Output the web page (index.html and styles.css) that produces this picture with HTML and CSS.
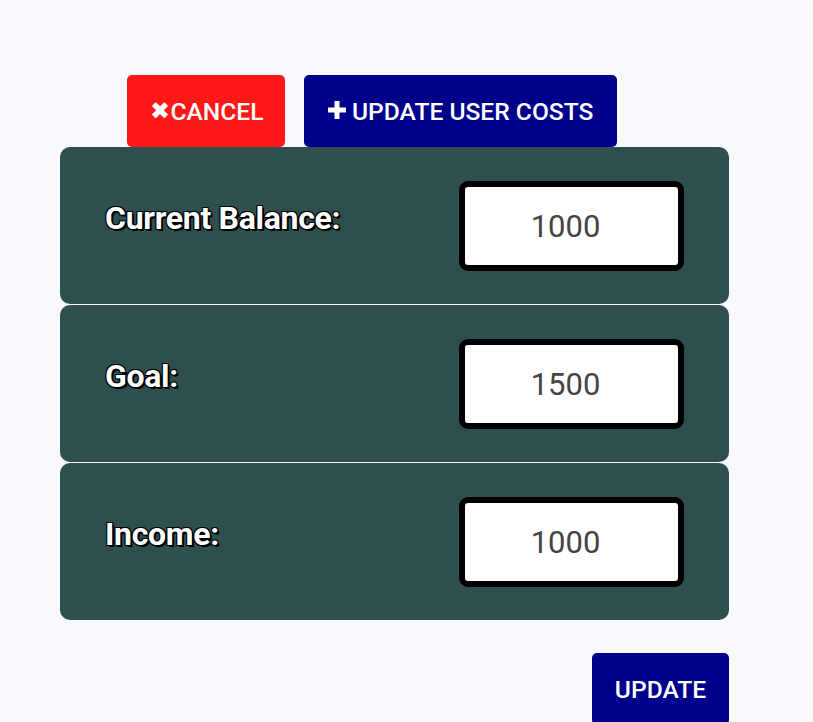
FILE: index.html
```html
<!DOCTYPE html>
<html>
<head>
<meta charset="utf-8">
<link rel="stylesheet" href="styles.css">
</head>
<body>
<div class="page">
  <div class="actions">
    <button class="btn btn-cancel"><span class="ico-x">✖</span>CANCEL</button>
    <button class="btn btn-primary"><svg class="ico-plus" viewBox="0 0 18 18" width="18" height="18"><path d="M6.5 0h5v6.5H18v5h-6.5V18h-5v-6.5H0v-5h6.5z" fill="#fff"/></svg>UPDATE USER COSTS</button>
  </div>
  <div class="cards">
    <div class="card">
      <span class="label">Current Balance:</span>
      <input class="field" type="text" value="1000">
    </div>
    <div class="card">
      <span class="label">Goal:</span>
      <input class="field" type="text" value="1500">
    </div>
    <div class="card">
      <span class="label">Income:</span>
      <input class="field" type="text" value="1000">
    </div>
  </div>
  <div class="footer">
    <button class="btn btn-primary btn-update">UPDATE</button>
  </div>
</div>
</body>
</html>
```

FILE: styles.css
```css
html, body {
  margin: 0;
  padding: 0;
  background: #f8f9fe;
  font-family: Roboto, "Liberation Sans", sans-serif;
}
.page {
  width: 669px;
  margin-left: 60px;
  padding-top: 75px;
}
.actions {
  display: flex;
  gap: 19px;
  padding-left: 67px;
}
.btn {
  border: none;
  border-radius: 5px;
  color: #fff;
  font-family: Roboto, "Liberation Sans", sans-serif;
  font-weight: 500;
  font-size: 24.6px;
  height: 72px;
  padding: 0 24px 0 24px;
  display: flex;
  align-items: center;
  cursor: pointer;
}
.btn-cancel {
  background: #ff1616;
  width: 158px;
  justify-content: center;
  padding: 0 0 0 2px;
}
.ico-x {
  font-size: 24px;
  line-height: 1;
}
.btn-primary {
  background: #00008b;
}
.ico-plus {
  margin-right: 6px;
  margin-top: -2px;
}
.cards {
  display: flex;
  flex-direction: column;
}
.card {
  background: #2f4f4f;
  border-radius: 10px;
  height: 157px;
  box-sizing: border-box;
  padding: 34px 45px 0 45px;
  display: flex;
  justify-content: space-between;
  align-items: flex-start;
}
.card + .card {
  margin-top: 1px;
}
.label {
  color: #fff;
  font-weight: 700;
  font-size: 32px;
  letter-spacing: -0.3px;
  margin-top: 18px;
  text-shadow: -1px -1px 0 #000, 1px -1px 0 #000, -1px 1px 0 #000, 1px 1px 0 #000, 2px 2px 0 #000;
}
.field {
  width: 225px;
  height: 90px;
  box-sizing: border-box;
  border: 6px solid #000;
  border-radius: 9px;
  background: #fff;
  text-align: center;
  padding: 0 12px 0 0;
  font-family: Roboto, "Liberation Sans", sans-serif;
  font-size: 31px;
  color: #444;
  outline: none;
}
.footer {
  display: flex;
  justify-content: flex-end;
  margin-top: 33px;
}
.btn-update {
  width: 137px;
  justify-content: center;
  padding: 0;
}
```
